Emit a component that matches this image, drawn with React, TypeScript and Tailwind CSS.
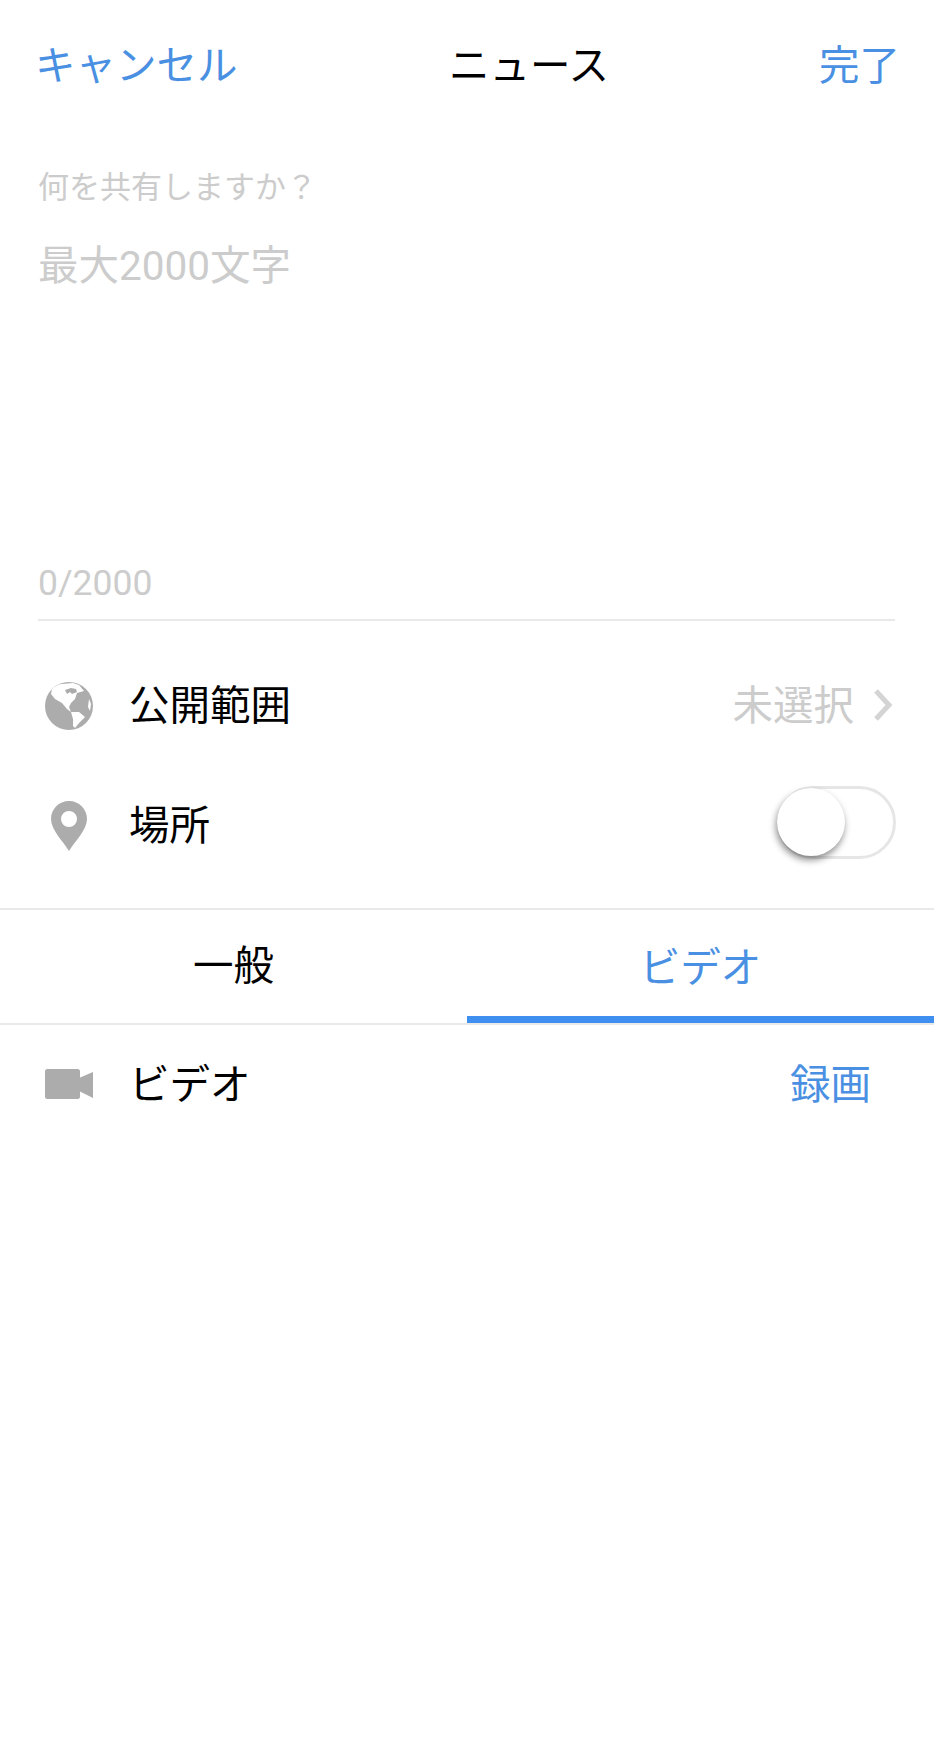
const FONT = { fontFamily: "Roboto, 'Noto Sans CJK JP', sans-serif" };

function GlobeIcon() {
  return (
    <svg viewBox="0 0 48 48" className="w-12 h-12">
      <circle cx="24" cy="24" r="24" fill="#acacac" />
      {/* north america */}
      <path
        fill="#ffffff"
        d="M7 7 C10 4 14 2 17 2 L28 1 L34 3 L39 9 L32 11 L30 17 L26 21 L24 25 L26 30 L22 27 L17 21 L10 17 L6 12 Z"
      />
      <path fill="#acacac" d="M20 8 L26 6 L31 7 L32 10 L27 12 L25 10 L22 12 Z" />
      {/* south america */}
      <path
        fill="#ffffff"
        d="M26 30 L34 30 L40 35 L35 40 L30 46 L28 44 L28 37 Z"
      />
      {/* africa edge */}
      <path fill="#ffffff" d="M44 17 L46 22 L45 29 L43 25 Z" />
    </svg>
  );
}

function PinIcon() {
  return (
    <svg viewBox="0 0 36 50" className="w-9 h-[50px]">
      <path
        fillRule="evenodd"
        fill="#acacac"
        d="M18 0 C8 0 0 8 0 18 C0 29 12 40 18 50 C24 40 36 29 36 18 C36 8 28 0 18 0 Z M18 10 A8 8 0 1 1 18 26 A8 8 0 1 1 18 10 Z"
      />
    </svg>
  );
}

function VideoIcon() {
  return (
    <svg viewBox="0 0 48 30" className="w-12 h-[30px] -mt-[3px]">
      <rect x="0" y="0" width="35" height="30" rx="2.5" fill="#acacac" />
      <path fill="#acacac" d="M34 9 L48 3 L48 29 L34 22 Z" />
    </svg>
  );
}

function Chevron() {
  return (
    <svg viewBox="0 0 20 34" className="w-5 h-[34px]">
      <path d="M3 3 L16 17 L3 31" fill="none" stroke="#d4d4d4" strokeWidth="5" />
    </svg>
  );
}

export default function App() {
  return (
    <div className="w-[934px] h-[1750px] bg-white flex flex-col" style={FONT}>
      {/* nav */}
      <header className="h-[130px] pl-[35px] pr-[34px] pt-[3px] flex items-center leading-none shrink-0">
        <span className="text-[#4a90e2] w-[414px] text-[40.5px]">キャンセル</span>
        <span className="text-black text-[40.5px]">ニュース</span>
        <span className="text-[#4a90e2] ml-auto text-[40.5px]">完了</span>
      </header>

      {/* compose */}
      <div className="ml-[38px] mr-[39px] h-[491px] border-b-2 border-[#e9e9e9] flex flex-col shrink-0">
        <div className="mt-[38px] text-[31px] leading-[40px] text-[#cccccc]">何を共有しますか？</div>
        <div className="mt-[33px] text-[40.5px] leading-[50px] text-[#cccccc]">最大2000文字</div>
        <div className="mt-auto mb-[16px] text-[35.5px] leading-[40px] text-[#cccccc]">0/2000</div>
      </div>

      {/* settings */}
      <div className="h-[289px] border-b-2 border-[#e9e9e9] pt-[25px] shrink-0">
        <div className="h-[120px] flex items-center pl-[45px] pr-[41px]">
          <GlobeIcon />
          <span className="ml-[36px] text-[40.5px] text-black">公開範囲</span>
          <span className="ml-auto text-[40.5px] text-[#cccccc]">未選択</span>
          <div className="ml-[19px] -mt-[2px]">
            <Chevron />
          </div>
        </div>
        <div className="h-[120px] flex items-center pl-[51px] pr-[38px]">
          <PinIcon />
          <span className="ml-[42px] text-[40.5px] text-black">場所</span>
          <div className="ml-auto -mt-[7px] relative w-[119px] h-[73px] border-[3px] border-[#e6e6e6] rounded-full bg-white">
            <div className="absolute -left-[3px] -top-[1px] w-[68px] h-[68px] rounded-full bg-white shadow-[-1px_4px_7px_rgba(0,0,0,0.45)]" />
          </div>
        </div>
      </div>

      {/* tabs */}
      <div className="h-[115px] border-b-2 border-[#e9e9e9] flex shrink-0">
        <div className="w-1/2 flex items-center justify-center text-[40.5px] text-black">一般</div>
        <div className="w-1/2 pt-[10px] flex items-center justify-center text-[40.5px] text-[#4a90e2] border-b-[7px] border-[#3f8ff0]">ビデオ</div>
      </div>

      {/* video row */}
      <div className="h-[120px] flex items-center pl-[45px] pr-[63px] shrink-0">
        <VideoIcon />
        <span className="ml-[36px] text-[40.5px] text-black">ビデオ</span>
        <span className="ml-auto text-[40.5px] text-[#4a90e2]">録画</span>
      </div>
    </div>
  );
}
